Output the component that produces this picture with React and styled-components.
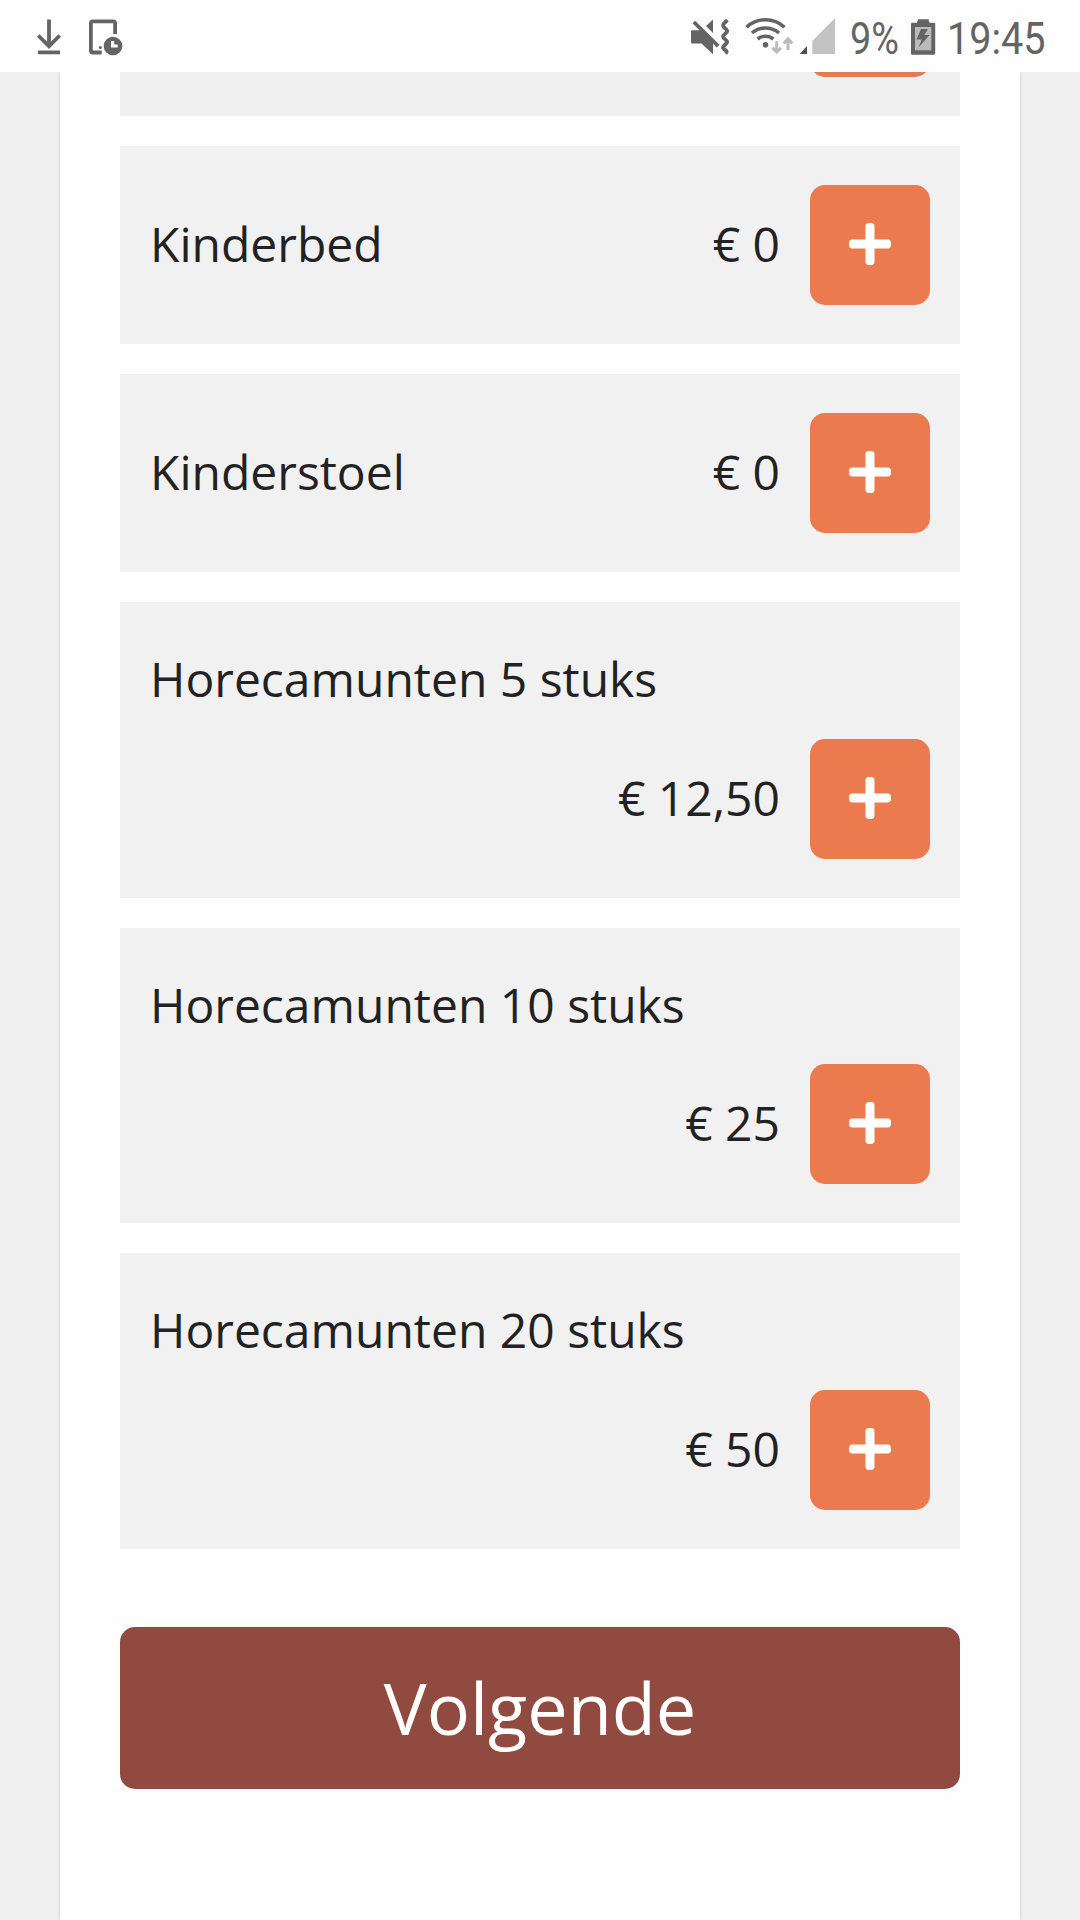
import React from "react";
import styled, { createGlobalStyle } from "styled-components";
import { FaPlus } from "react-icons/fa";

const GlobalStyle = createGlobalStyle`
  * { box-sizing: border-box; }
  body { margin: 0; background: #f0f0f0; }
`;

const Screen = styled.div`
  display: flex;
  flex-direction: column;
  width: 1080px;
  height: 1920px;
  overflow: hidden;
  background: #f0f0f0;
  color: #222;
  font-family: "Open Sans", "Noto Sans", sans-serif;
`;

const StatusBar = styled.header`
  display: flex;
  flex: none;
  justify-content: space-between;
  height: 72px;
  padding: 0 34px 0 36px;
  background: #fefefe;
  color: #646464;
`;

const StatusGroup = styled.div`
  display: flex;
`;

const Glyph = styled.svg`
  display: block;
  flex: none;
  width: ${(p) => p.$width}px;
  height: 72px;
  margin-left: ${(p) => p.$gap || 0}px;
`;

const StatusText = styled.span`
  flex: none;
  width: ${(p) => p.$width}px;
  margin-left: ${(p) => p.$gap}px;
  padding-top: 13px;
  font: 400 45px/52px Roboto, sans-serif;
  white-space: nowrap;
  transform: scaleX(${(p) => p.$squeeze});
  transform-origin: left;
`;

const Sheet = styled.main`
  display: flex;
  flex: 1;
  flex-direction: column;
  width: 960px;
  margin: 0 auto;
  padding: 0 60px;
  background: #fefefe;
  box-shadow: 0 0 3px rgba(0, 0, 0, 0.2);
  clip-path: inset(0 -6px);
`;

const ItemList = styled.div`
  display: flex;
  flex-direction: column;
  gap: 30px;
`;

const Item = styled.section`
  display: flex;
  flex-direction: ${(p) => (p.$stacked ? "column" : "row")};
  justify-content: space-between;
  height: ${(p) => (p.$stacked ? 295.6 : 198)}px;
  padding: 39px 30px;
  background: #f1f1f1;
`;

const ScrolledItem = styled.section`
  display: flex;
  justify-content: flex-end;
  height: 44px;
  padding: 0 30px;
  background: #f0f0f0;
`;

const ButtonEdge = styled.div`
  width: 120px;
  height: 5px;
  overflow: hidden;
  display: flex;
  align-items: flex-end;

  &::after {
    content: "";
    flex: none;
    width: 120px;
    height: 60px;
    border-radius: 15px;
    background: #e27b56;
  }
`;

const Label = styled.span`
  font-size: 48px;
  line-height: ${(p) => (p.$stacked ? 75 : 117)}px;
`;

const Purchase = styled.div`
  display: flex;
  justify-content: flex-end;
  gap: 30px;
`;

const Price = styled.span`
  font-size: 48px;
  line-height: 117px;
`;

const AddButton = styled.button`
  display: flex;
  align-items: center;
  justify-content: center;
  width: 120px;
  height: 120px;
  padding: 0 0 2px;
  border: 0;
  border-radius: 15px;
  background: #ec7a4f;
  color: #fff;
  font-size: 48px;
`;

const NextButton = styled.button`
  height: 162px;
  margin-top: 78px;
  padding: 0 0 2px;
  border: 0;
  border-radius: 15px;
  background: #914a3f;
  color: #fff;
  font-family: inherit;
  font-size: 72px;
  line-height: 108px;
`;

const items = [
  { name: "Kinderbed", price: "€ 0" },
  { name: "Kinderstoel", price: "€ 0" },
  { name: "Horecamunten 5 stuks", price: "€ 12,50", stacked: true },
  { name: "Horecamunten 10 stuks", price: "€ 25", stacked: true },
  { name: "Horecamunten 20 stuks", price: "€ 50", stacked: true },
];

const DownloadIcon = () => (
  <Glyph $width={26} viewBox="36 0 26 72" fill="none" stroke="currentColor" strokeWidth="3.8">
    <path d="M49 19.5V46M38.3 35.5 49 46.4 59.7 35.5M38 52.4H60" />
  </Glyph>
);

const DeviceClockIcon = () => (
  <Glyph $width={36} $gap={26} viewBox="88 0 36 72" fill="none" stroke="currentColor" strokeWidth="3.8">
    <path d="M115.1 34V23.4a2 2 0 0 0-2-2H92.9a2 2 0 0 0-2 2V50.5a2 2 0 0 0 2 2H101.7" />
    <circle cx="100.3" cy="47.6" r="1.5" fill="currentColor" stroke="none" />
    <circle cx="113" cy="46" r="9.3" fill="currentColor" stroke="none" />
    <path d="M112.6 41V46H117.7" stroke="#fefefe" strokeWidth="3.2" />
  </Glyph>
);

const MuteIcon = () => (
  <Glyph $width={40} viewBox="690 0 40 72" fill="none" stroke="currentColor">
    <path d="M692 30.2H701.5L713 41.5V54.3L701.5 43.6H692a1 1 0 0 1-1-1V31.2a1 1 0 0 1 1-1ZM706 26 713 19.4V33Z" fill="currentColor" stroke="none" />
    <path d="M693.8 22 718.2 46.2" strokeWidth="3.8" />
    <path d="M727.4 20 723.7 23.8Q722.6 25.4 723.7 27L726.4 29.6Q727.8 31 726.4 32.6L723.7 35.2Q722.6 36.6 723.7 38L726.4 40.6Q727.8 42 726.4 43.4L723.7 46Q722.6 47.4 723.7 48.8L726.4 51Q727.2 51.8 725.6 53.6" strokeWidth="3.8" />
  </Glyph>
);

const WifiIcon = () => (
  <Glyph $width={50} $gap={14} viewBox="744 0 50 72" fill="none" stroke="currentColor" strokeWidth="3.6">
    <path d="M746.5 27.2A28 28 0 0 1 784.5 27.2M752 33A20.5 20.5 0 0 1 779 33M757.6 39A12.5 12.5 0 0 1 773.4 39" />
    <circle cx="765.5" cy="44.7" r="2.8" fill="currentColor" stroke="none" />
    <path d="M776.7 41.2V52M772.4 47.8 776.7 52.2 781 47.8M788 50V39M783.7 43.4 788 39 792.3 43.4" stroke="#bbb" strokeWidth="3" />
  </Glyph>
);

const SignalIcon = () => (
  <Glyph $width={36} $gap={5} viewBox="799 0 36 72">
    <path d="M799.7 54H807V46Z" fill="#505050" />
    <path d="M812.3 54H835V18.3L812.3 41Z" fill="#c2c2c2" />
  </Glyph>
);

const BatteryIcon = () => (
  <Glyph $width={25} $gap={11} viewBox="911 0 25 72" fill="currentColor">
    <path d="M918 19.2H928.5L929.5 22.8H934a1.2 1.2 0 0 1 1.2 1.2V53.5a1.2 1.2 0 0 1-1.2 1.2H912.2A1.2 1.2 0 0 1 911 53.5V24a1.2 1.2 0 0 1 1.2-1.2H917Z" />
    <path d="M915 27H931.3V50.3H915Z" fill="#bbb" />
    <path d="M921 29H928L924.2 35H929.6L918.5 47.4 921.8 39.5H916.5Z" />
  </Glyph>
);

function ExtraItem({ name, price, stacked }) {
  return (
    <Item $stacked={stacked}>
      <Label $stacked={stacked}>{name}</Label>
      <Purchase>
        <Price>{price}</Price>
        <AddButton aria-label={`${name} +`}>
          <FaPlus />
        </AddButton>
      </Purchase>
    </Item>
  );
}

export default function App() {
  return (
    <Screen>
      <GlobalStyle />
      <StatusBar>
        <StatusGroup>
          <DownloadIcon />
          <DeviceClockIcon />
        </StatusGroup>
        <StatusGroup>
          <MuteIcon />
          <WifiIcon />
          <SignalIcon />
          <StatusText $width={50} $gap={15} $squeeze={0.84}>9%</StatusText>
          <BatteryIcon />
          <StatusText $width={99} $gap={11} $squeeze={0.88}>19:45</StatusText>
        </StatusGroup>
      </StatusBar>
      <Sheet>
        <ItemList>
          <ScrolledItem>
            <ButtonEdge />
          </ScrolledItem>
          {items.map((item) => (
            <ExtraItem key={item.name} {...item} />
          ))}
        </ItemList>
        <NextButton>Volgende</NextButton>
      </Sheet>
    </Screen>
  );
}
